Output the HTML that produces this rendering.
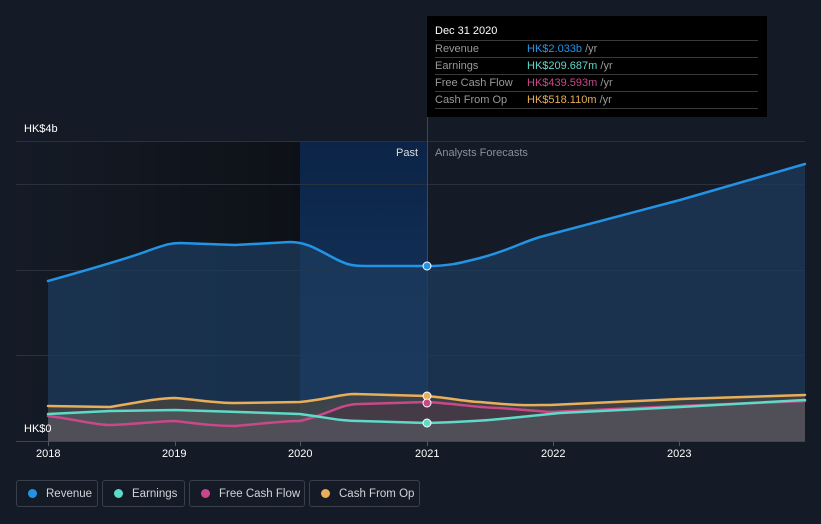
<!DOCTYPE html>
<html><head><style>
body{margin:0;background:#151b26;width:821px;height:524px;overflow:hidden;font-family:"Liberation Sans",sans-serif;position:relative}
.t{position:absolute;color:#fff;font-size:11px}
.leg{position:absolute;top:480px;height:27px;border:1px solid #3a404b;border-radius:3px;color:#d0d3d8;font-size:11.5px;line-height:26px;box-sizing:border-box;white-space:nowrap;overflow:hidden}
.leg i{display:inline-block;width:9px;height:9px;border-radius:50%;margin:0 9px 0 11px;vertical-align:-1px}
.tip{position:absolute;left:427px;top:16px;width:340px;height:101px;background:#000}
.row{position:absolute;left:8px;width:323px;border-top:1px solid #3a3a3a;font-size:11px;color:#999;height:16px;line-height:16px;white-space:nowrap}
.row span{position:absolute;left:92px}
</style></head><body>
<svg width="821" height="524" style="position:absolute;left:0;top:0">
<defs>
<linearGradient id="dk" x1="0" x2="1" y1="0" y2="0"><stop offset="0" stop-color="#151b26"/><stop offset="1" stop-color="#0d1117"/></linearGradient>
<linearGradient id="bl" x1="0" x2="0" y1="0" y2="1"><stop offset="0" stop-color="#0b2447"/><stop offset="1" stop-color="#1a3a64"/></linearGradient>
</defs>
<rect x="16" y="141" width="284" height="300" fill="url(#dk)"/>
<rect x="300" y="141" width="127" height="300" fill="url(#bl)"/>
<g stroke="#2b313c" stroke-width="1">
<line x1="16" y1="141.5" x2="805" y2="141.5"/><line x1="16" y1="184.5" x2="805" y2="184.5"/><line x1="16" y1="270.5" x2="805" y2="270.5"/><line x1="16" y1="355.5" x2="805" y2="355.5"/><line x1="16" y1="441.5" x2="805" y2="441.5" stroke="#444"/>
</g>
<line x1="427.5" y1="16" x2="427.5" y2="441" stroke="#2d4a72"/>
<path d="M48,281 C80,272 130,258 150,250 C165,245 170,243 180,243 L235,245 L290,242 C305,242 315,248 330,256 C345,264 350,266 365,266 L427,266 C450,266 460,263 480,258 C510,250 520,243 540,237 L680,200 L805,164 L805,441 L48,441Z" fill="#1c3b5c" opacity="0.75"/>
<path d="M48,406 L110,407 C140,402 160,398 175,398 C200,400 215,403 235,403 L300,402 C330,399 340,394 355,394 L427,396 C450,398 470,402 480,402 C520,406 530,405 550,405 L680,399 L805,395 L805,441 L48,441Z" fill="#554b3e" opacity="0.6"/>
<path d="M48,416 C80,420 95,425 110,425 C140,424 160,421 175,421 C200,424 215,426 235,426 C260,424 280,421 300,421 C330,414 340,404 360,404 L427,402 C460,404 480,408 500,408 L550,412 L680,406 L805,401 L805,441 L48,441Z" fill="#4a3646" opacity="0.6"/>
<path d="M48,414 L110,411 L175,410 L300,414 C330,418 340,421 360,421 L427,423 C460,422 480,421 500,419 L560,413 L680,407 L805,400 L805,441 L48,441Z" fill="#5b6068" opacity="0.55"/>
<g fill="none" stroke-width="2.5" stroke-linecap="round">
<path d="M48,281 C80,272 130,258 150,250 C165,245 170,243 180,243 L235,245 L290,242 C305,242 315,248 330,256 C345,264 350,266 365,266 L427,266 C450,266 460,263 480,258 C510,250 520,243 540,237 L680,200 L805,164" stroke="#2394e5"/>
<path d="M48,406 L110,407 C140,402 160,398 175,398 C200,400 215,403 235,403 L300,402 C330,399 340,394 355,394 L427,396 C450,398 470,402 480,402 C520,406 530,405 550,405 L680,399 L805,395" stroke="#e8ae5a"/>
<path d="M48,416 C80,420 95,425 110,425 C140,424 160,421 175,421 C200,424 215,426 235,426 C260,424 280,421 300,421 C330,414 340,404 360,404 L427,402 C460,404 480,408 500,408 L550,412 L680,406 L805,401" stroke="#c9488a"/>
<path d="M48,414 L110,411 L175,410 L300,414 C330,418 340,421 360,421 L427,423 C460,422 480,421 500,419 L560,413 L680,407 L805,400" stroke="#5fd9c8"/>
</g>
<g stroke="#fff" stroke-width="1">
<circle cx="427" cy="266" r="4" fill="#2394e5"/><circle cx="427" cy="396" r="4" fill="#e8ae5a"/><circle cx="427" cy="403" r="4" fill="#c9488a"/><circle cx="427" cy="423" r="4" fill="#5fd9c8"/>
</g>
<g stroke="#555"><line x1="48.5" y1="441" x2="48.5" y2="446"/><line x1="175.5" y1="441" x2="175.5" y2="446"/><line x1="300.5" y1="441" x2="300.5" y2="446"/><line x1="427.5" y1="441" x2="427.5" y2="446"/><line x1="553.5" y1="441" x2="553.5" y2="446"/><line x1="679.5" y1="441" x2="679.5" y2="446"/></g>
</svg>
<div class="t" style="left:24px;top:123px">HK$4b</div>
<div class="t" style="left:24px;top:423px">HK$0</div>
<div class="t" style="left:396px;top:147px;color:#ddd">Past</div>
<div class="t" style="left:435px;top:147px;color:#8a9099">Analysts Forecasts</div>
<div class="t" style="left:36px;top:448px">2018</div>
<div class="t" style="left:162px;top:448px">2019</div>
<div class="t" style="left:288px;top:448px">2020</div>
<div class="t" style="left:415px;top:448px">2021</div>
<div class="t" style="left:541px;top:448px">2022</div>
<div class="t" style="left:667px;top:448px">2023</div>
<div class="tip">
<div style="position:absolute;left:8px;top:9px;color:#fff;font-size:11px">Dec 31 2020</div>
<div class="row" style="top:24px">Revenue<span><b style="font-weight:normal;color:#2394e5">HK$2.033b</b> /yr</span></div>
<div class="row" style="top:41px">Earnings<span><b style="font-weight:normal;color:#5fd9c8">HK$209.687m</b> /yr</span></div>
<div class="row" style="top:58px">Free Cash Flow<span><b style="font-weight:normal;color:#c9488a">HK$439.593m</b> /yr</span></div>
<div class="row" style="top:75px;border-bottom:1px solid #3a3a3a">Cash From Op<span><b style="font-weight:normal;color:#e8ae5a">HK$518.110m</b> /yr</span></div>
</div>
<div class="leg" style="left:16px;width:82px"><i style="background:#2394e5"></i>Revenue</div>
<div class="leg" style="left:102px;width:83px"><i style="background:#5fd9c8"></i>Earnings</div>
<div class="leg" style="left:189px;width:116px"><i style="background:#c9488a"></i>Free Cash Flow</div>
<div class="leg" style="left:309px;width:111px"><i style="background:#e8ae5a"></i>Cash From Op</div>
</body></html>
